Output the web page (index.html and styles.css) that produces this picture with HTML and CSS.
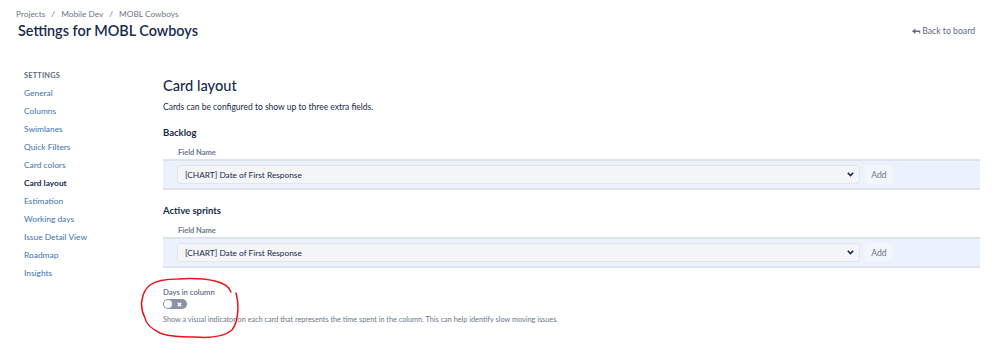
FILE: index.html
```html
<!DOCTYPE html>
<html lang="en">
<head>
<meta charset="utf-8">
<title>Settings for MOBL Cowboys</title>
<link rel="stylesheet" href="styles.css">
</head>
<body>
<div class="page">
  <nav class="crumbs">
    <a href="#">Projects</a><span class="sep">/</span><a href="#">Mobile Dev</a><span class="sep">/</span><a href="#">MOBL Cowboys</a>
  </nav>
  <div class="title-row">
    <h1 class="title">Settings for MOBL Cowboys</h1>
    <a class="back" href="#"><svg class="back-icon" width="9" height="7" viewBox="0 0 9 7"><path d="M0 3.2 L3.4 0.4 L3.4 2.4 L8.2 2.4 L8.2 5.6 L7.2 5.6 L7.2 4 L3.4 4 L3.4 6 Z" fill="#5e6c84"/></svg>Back to board</a>
  </div>
  <div class="layout">
    <aside class="sidebar">
      <div class="side-head">SETTINGS</div>
      <a class="side-link" href="#">General</a>
      <a class="side-link" href="#">Columns</a>
      <a class="side-link" href="#">Swimlanes</a>
      <a class="side-link" href="#">Quick Filters</a>
      <a class="side-link" href="#">Card colors</a>
      <a class="side-link active" href="#">Card layout</a>
      <a class="side-link" href="#">Estimation</a>
      <a class="side-link" href="#">Working days</a>
      <a class="side-link" href="#">Issue Detail View</a>
      <a class="side-link" href="#">Roadmap</a>
      <a class="side-link" href="#">Insights</a>
    </aside>
    <main class="main">
      <h2 class="heading">Card layout</h2>
      <p class="desc">Cards can be configured to show up to three extra fields.</p>

      <h3 class="section">Backlog</h3>
      <div class="field-label">Field Name</div>
      <div class="band">
        <div class="select"><span>[CHART] Date of First Response</span><svg class="chev" width="7" height="5" viewBox="0 0 7 5"><path d="M0.8 0.8 L3.5 3.6 L6.2 0.8" fill="none" stroke="#172b4d" stroke-width="1.6"/></svg></div>
        <button class="add">Add</button>
      </div>

      <h3 class="section section-2">Active sprints</h3>
      <div class="field-label">Field Name</div>
      <div class="band">
        <div class="select"><span>[CHART] Date of First Response</span><svg class="chev" width="7" height="5" viewBox="0 0 7 5"><path d="M0.8 0.8 L3.5 3.6 L6.2 0.8" fill="none" stroke="#172b4d" stroke-width="1.6"/></svg></div>
        <button class="add">Add</button>
      </div>

      <div class="days">
        <div class="days-label">Days in column</div>
        <div class="toggle"><span class="knob"></span><svg class="x" width="5" height="5" viewBox="0 0 5 5"><path d="M0.7 0.7 L4.3 4.3 M4.3 0.7 L0.7 4.3" stroke="#fff" stroke-width="1.3"/></svg></div>
        <p class="days-desc">Show a visual indicator on each card that represents the time spent in the column. This can help identify slow moving issues.</p>
        <svg class="circle" width="102" height="64" viewBox="0 0 102 64"><path d="M96 16 C99 26 99 44 92 53 C84 60 68 61 55 60 C40 60 27 59 20 56 C12 52 6 47 5 41 C2 35 1 28 2 23 C3 16 6 11 10 8 C17 3 28 2 38 2 C52 1 66 2 75 4 C84 6 89 10 91 15" fill="none" stroke="#e8141a" stroke-width="1.5" stroke-linecap="round"/></svg>
      </div>
    </main>
  </div>
</div>
</body>
</html>
```
FILE: styles.css
```css
* { box-sizing: border-box; }
html, body { min-height: 100%; }
body {
  margin: 0;
  background: #fff;
  font-family: Lato, "Noto Sans", sans-serif;
  color: #172b4d;
}
a { text-decoration: none; }
.page {
  padding: 8px 18px 40px 16px;
  min-height: 358px;
}
.crumbs {
  font-size: 8.3px;
  line-height: 12px;
  color: #6b778c;
}
.crumbs a { color: #6b778c; }
.crumbs .sep { margin: 0 6px; }
.title-row {
  display: flex;
  justify-content: space-between;
  align-items: center;
  margin-top: 1px;
  padding-left: 2px;
}
.title {
  margin: 0;
  font-size: 14.4px;
  line-height: 20px;
  font-weight: 600;
  color: #172b4d;
}
.back {
  display: flex;
  align-items: center;
  gap: 1px;
  font-size: 8.7px;
  color: #5e6c84;
  line-height: 12px;
  margin-right: 5px;
}
.layout {
  display: flex;
  margin-top: 26px;
}
.sidebar {
  width: 147px;
  padding-left: 8px;
  display: flex;
  flex-direction: column;
}
.side-head {
  font-size: 7.4px;
  font-weight: 700;
  color: #5e6c84;
  line-height: 17px;
  letter-spacing: 0.2px;
}
.side-link {
  font-size: 8.4px;
  line-height: 18px;
  color: #3b73af;
}
.side-link.active {
  color: #172b4d;
  font-weight: 700;
}
.main {
  flex: 1;
  padding-top: 9px;
}
.heading {
  margin: 0;
  font-size: 14.6px;
  line-height: 20px;
  font-weight: 500;
}
.desc {
  margin: 5px 0 0;
  font-size: 8.5px;
  line-height: 12px;
}
.section {
  margin: 13px 0 0;
  font-size: 9.5px;
  font-weight: 700;
  line-height: 14px;
}
.section-2 { margin-top: 14px; }
.field-label {
  margin-top: 8px;
  padding-left: 15px;
  font-size: 7.5px;
  font-weight: 700;
  line-height: 10px;
  color: #6b778c;
}
.band {
  margin-top: 1px;
  height: 31px;
  background: #ebf2fd;
  border-top: 2px solid #dfe3ea;
  border-bottom: 2px solid #dfe3ea;
  display: flex;
  align-items: center;
  padding-left: 14px;
}
.select {
  width: 683px;
  height: 19px;
  background: #f4f5f7;
  border: 1px solid #e2e5ea;
  border-radius: 3px;
  display: flex;
  align-items: center;
  justify-content: space-between;
  padding: 0 5px 0 7px;
  font-size: 8.3px;
  color: #172b4d;
}
.chev { display: block; }
.add {
  margin-left: 5px;
  width: 28px;
  height: 19px;
  border: 0;
  border-radius: 3px;
  background: #f2f5fa;
  color: #6b778c;
  font-family: inherit;
  font-size: 8.6px;
  padding: 0;
}
.days {
  position: relative;
  margin-top: 19px;
}
.days-label {
  font-size: 7.7px;
  line-height: 10px;
  font-weight: 600;
  color: #5e6c84;
}
.toggle {
  margin-top: 2px;
  width: 24px;
  height: 10px;
  border-radius: 5px;
  background: #8993a4;
  display: flex;
  align-items: center;
  justify-content: space-between;
  padding: 0 5px 0 1px;
}
.knob {
  width: 8px;
  height: 8px;
  border-radius: 50%;
  background: #fff;
}
.x { display: block; }
.days-desc {
  margin: 5px 0 0;
  font-size: 7.3px;
  line-height: 12px;
  color: #6b778c;
}
.circle {
  position: absolute;
  left: -23px;
  top: -10px;
}
```
